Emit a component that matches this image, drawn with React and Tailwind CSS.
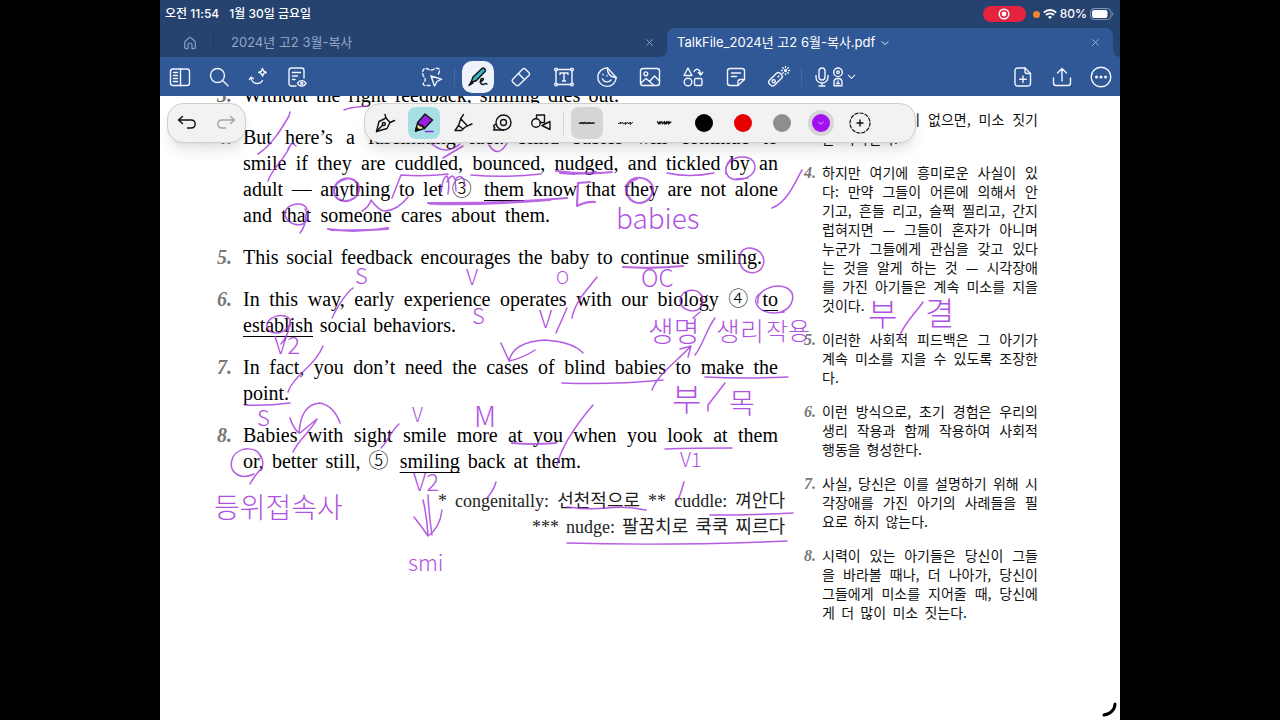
import React from 'react';

const uiFont = "font-['Inter','Noto_Sans_CJK_KR',sans-serif]";
const serifFont = "font-['Liberation_Serif','Noto_Sans_CJK_KR',serif]";
const koreanFont = "font-['Noto_Sans_CJK_KR',sans-serif]";

const Icon = ({ children, className = 'size-6' }) => (
  <svg
    viewBox="0 0 24 24"
    className={className}
    fill="none"
    stroke="currentColor"
    strokeWidth="1.4"
    strokeLinecap="round"
    strokeLinejoin="round"
    aria-hidden="true"
  >
    {children}
  </svg>
);

const icons = {
  sidebar: (
    <>
      <rect x="2.5" y="4" width="19" height="16.5" rx="2.5" />
      <path d="M12.5 4v16.5M5.5 7.5h4M5.5 10.5h4M5.5 13.5h4M5.5 16.5h4" />
    </>
  ),
  search: (
    <>
      <circle cx="10.5" cy="10.5" r="7" />
      <path d="M15.8 15.8l5.2 5" />
    </>
  ),
  spark: (
    <>
      <path d="M16.500 3.500l1.200 2.600 2.600 1.200-2.600 1.200-1.200 2.600-1.200-2.600-2.600-1.200 2.600-1.200z" />
      <path d="M3.500 14.500l1.500-2.300 2.500 1.300M5.200 12.500c.5 4 3 6 6 6 2.500 0 4.300-1.200 5.300-3" />
    </>
  ),
  docEye: (
    <>
      <path d="M11 21H6.500A2.500 2.500 0 0 1 4 18.500v-13A2.500 2.500 0 0 1 6.500 3h10A2.500 2.500 0 0 1 19 5.500V13" />
      <path d="M7.500 7.500h8M7.500 11h5M7.500 14.500h2.500" />
      <path d="M12.500 18.300c2-3.600 6.500-3.600 8.500 0-2 3.600-6.500 3.600-8.500 0z" />
      <circle cx="16.800" cy="18.300" r="1" />
    </>
  ),
  lasso: (
    <>
      <path
        strokeDasharray="3 2.200"
        d="M10 20.500H5c-2 0-2.300-2-1-3.200 1.800-2 1.500-3.800 0-5.300-1.500-2-1.800-5.500-.5-7.500 1-1.500 3-1.300 4.500-.3 2 1.200 4.500 1 6.500-.4 2-1 4.500-.8 5 1.200.4 1.500-1.200 3-1 5"
      />
      <path d="M11 11l10.500 3.200-4.500 2.300-2.500 4.500z" />
    </>
  ),
  pen: (
    <>
      <path d="M5 17.500l2-5.500L16 3.500c1.500-1.400 4.500 1.200 3.200 2.800L10.500 15.500z" fill="#3bb3c4" stroke="#111" />
      <path d="M3 20.500l2-3 2 .500zM14 17c3-1 4.500-3.500 2.500-3.500-2.500 0-3 6 .5 6 2 0 2-2 4-.5" fill="none" stroke="#111" />
    </>
  ),
  eraser: (
    <>
      <path d="M3.800 14.200L13.500 4.300c1-1 2-1 3 0l3.300 3.300c1 1 1 2 0 3L10 20c-1 1-2.200 1-3.200 0l-3-3c-.9-.9-.9-1.900 0-2.800z" />
      <path d="M9.500 8.500l6.200 6.200" />
    </>
  ),
  text: (
    <>
      <path d="M5 4.500h14M5 19.500h14M4 6v12M20 6v12" />
      <circle cx="4" cy="4.500" r="1.400" />
      <circle cx="20" cy="4.500" r="1.400" />
      <circle cx="4" cy="19.500" r="1.400" />
      <circle cx="20" cy="19.500" r="1.400" />
      <path d="M8 9.500V8h8v1.500M12 8v8M10.500 16h3" />
    </>
  ),
  sticker: (
    <>
      <path d="M12.500 3a9.200 9.200 0 1 0 8.700 9.500z" />
      <path d="M12.500 3c-.5 5.500 3 9.500 8.700 9.500" />
      <path d="M7.500 14c1.500 3.500 6.500 3.700 8.500 1M8 9.300v.6M12 10.500v.4" />
    </>
  ),
  image: (
    <>
      <rect x="2.500" y="3.500" width="19" height="17" rx="2.500" />
      <circle cx="7.800" cy="8.800" r="1.900" />
      <path d="M3 18l5-4.500 3.500 3 5-5.500 5 5M12 17l3.500 3" />
    </>
  ),
  shapes: (
    <>
      <path d="M7 3l4 7.500H3z" />
      <circle cx="7" cy="17" r="3.800" />
      <rect x="13.500" y="13.500" width="7.500" height="7" rx="1.500" />
      <path d="M13 6.500c2-3.500 6-3 6.500 2.500M17.300 7.500L19.700 10l2-2.700" />
    </>
  ),
  note: (
    <>
      <path d="M14 20.500H6A2.500 2.500 0 0 1 3.500 18V6A2.500 2.500 0 0 1 6 3.500h12A2.500 2.500 0 0 1 20.500 6v8.500z" />
      <path d="M14 20.500v-3.500a2.500 2.500 0 0 1 2.500-2.500h4M7.500 8h9M7.500 11.500h5" />
    </>
  ),
  laser: (
    <>
      <rect x="1" y="10.800" width="15" height="7" rx="2.500" transform="rotate(-45 8.500 14.300)" />
      <circle cx="6.700" cy="16.300" r="1.600" />
      <path d="M11 12l1-1" />
      <circle cx="18.500" cy="5.500" r="1" />
      <path d="M18.500 1.500v.8M18.500 8.700v.8M14.500 5.500h.8M21.700 5.500h.8M15.700 2.700l.5.500M20.800 7.800l.5.500M15.700 8.300l.5-.5M20.800 3.200l.5-.5" />
    </>
  ),
  mic: (
    <>
      <rect x="9" y="3" width="6" height="12" rx="3" />
      <path d="M6 10.500v1.500c0 8 12 8 12 0v-1.500M12 18v3M9 21h6" />
    </>
  ),
  speaker: (
    <>
      <circle cx="12" cy="7.300" r="4.300" />
      <circle cx="12" cy="7.300" r="1.300" />
      <path d="M8 20.800v-3.500c0-5 8-5 8 0v3.500zM12 16v2.500M10.500 18.500h3" />
    </>
  ),
  addPage: (
    <>
      <path d="M14 3H6.500A2.500 2.500 0 0 0 4 5.500v13A2.500 2.500 0 0 0 6.500 21h10.500a2.500 2.500 0 0 0 2.500-2.500V8.500z" />
      <path d="M14 3v3.500a2 2 0 0 0 2 2h3.500M12 11v6.500M8.700 14.200h6.500" />
    </>
  ),
  share: <path d="M12 16V3.500M7.500 8L12 3.500 16.500 8M3.500 13v5A2.500 2.500 0 0 0 6 20.500h12a2.500 2.500 0 0 0 2.500-2.500v-5" />,
  more: (
    <>
      <circle cx="12" cy="12" r="9.800" />
      <path d="M7.500 12h.01M12 12h.01M16.500 12h.01" strokeWidth="3" />
    </>
  ),
  chevron: <path d="M3 8l9 9 9-9" strokeWidth="2.800" />,
  close: <path d="M4 4l16 16M20 4L4 20" strokeWidth="2.400" />,
  home: <path d="M4 11.500c0-1 .3-1.500 1-2.200l5.300-5c1-.9 2.400-.9 3.400 0l5.300 5c.7.700 1 1.200 1 2.200V18a2.500 2.500 0 0 1-2.500 2.500H15V15a3 3 0 0 0-6 0v5.500H6.500A2.500 2.500 0 0 1 4 18z" strokeWidth="1.800" />,
  undo: <path d="M7.500 5.500l-4 3.500 4 3.500M3.500 9H16c5.500 0 5.500 8 0 8h-3.500" />,
  redo: <path d="M16.500 5.500l4 3.500-4 3.500M20.500 9H8c-5.500 0-5.500 8 0 8h3.500" />,
  fountain: (
    <>
      <path d="M3.500 20.500l2.500-10 7-3.500 4 4.500-3 6z" />
      <path d="M3.500 20.500l6-6.300M13 7l-1-3.500M17 11.500l4.500-2" />
      <circle cx="10.800" cy="13" r="1.500" />
    </>
  ),
  highlighter: (
    <>
      <path d="M3.500 20l2.200-8.500 6.800 6z" fill="#f2dc9c" stroke="#111" />
      <path d="M5.700 11.500L13 3l7.500 6-8 8.500-2-3.200-3 .2z" fill="#9b1fe0" stroke="#111" />
      <path d="M3.500 20l1-3.500 2.500 2.300z" fill="#111" stroke="#111" />
      <path d="M13.500 20.500h7.500" stroke="#9b1fe0" strokeWidth="1.600" />
    </>
  ),
  marker: (
    <>
      <path d="M4 19.500l3.500-5 4.500 3.500-1.500 1.500z" />
      <path d="M7.500 14.500c2-4 1-6.500 5-11M12 18c2.500-3 4.500-3 9-5M9.500 7.500l7 7.500" />
    </>
  ),
  tape: (
    <>
      <circle cx="13.500" cy="11.500" r="7.500" />
      <circle cx="13.500" cy="11.500" r="3" />
      <path d="M13.500 19h-10l1.300-2-1.300-2 1.500-1.500h1.500" />
    </>
  ),
  lassoShape: (
    <>
      <circle cx="7" cy="12" r="4.300" />
      <path d="M7.500 7.500V4h8v7.500H11M13 14.500l8-4v8z" />
    </>
  ),
};

const leftTools = [
  { name: 'Sidebar', icon: 'sidebar' },
  { name: 'Search', icon: 'search' },
  { name: 'Assistant', icon: 'spark' },
  { name: 'Document view', icon: 'docEye' },
];

const middleTools = [
  { name: 'Pen', icon: 'pen', active: true },
  { name: 'Eraser', icon: 'eraser' },
  { name: 'Text', icon: 'text' },
  { name: 'Sticker', icon: 'sticker' },
  { name: 'Image', icon: 'image' },
  { name: 'Shapes', icon: 'shapes' },
  { name: 'Note', icon: 'note' },
  { name: 'Laser pointer', icon: 'laser' },
];

const rightTools = [
  { name: 'Add page', icon: 'addPage' },
  { name: 'Share', icon: 'share' },
  { name: 'More', icon: 'more' },
];

const penTools = [
  { name: 'Fountain pen', icon: 'fountain' },
  { name: 'Pencil', icon: 'highlighter', active: true },
  { name: 'Highlighter', icon: 'marker' },
  { name: 'Tape', icon: 'tape' },
  { name: 'Shape pen', icon: 'lassoShape' },
];

const strokes = [
  { name: 'Thin stroke', d: 'M4.500 12.200l3-.5 1 .8 2-1 1.500 1 2-.8 2 .6 3-.3', width: 1.5, active: true },
  { name: 'Medium stroke', d: 'M4.500 12.500l2-1v1.500l2-2 1 2 2-1.500v2l2-2.500 1 2 2-2-.5 2.500 2.500-2', width: 1 },
  { name: 'Thick stroke', d: 'M4.500 10.500l1 2.500 1.500-2.500v2.500l2-2.500.5 2.500 2-2.500v2.500l2.500-2.500-1 2.500 3-2.500-.5 2.500 2.500-2', width: 1.2 },
];

const Line = ({ w = 'w-full', children }) => (
  <span className={`block whitespace-nowrap text-justify [text-align-last:justify] ${w}`}>{children}</span>
);

const Mark = ({ children }) => <span className="underline underline-offset-4 decoration-1">{children}</span>;

const Circled = ({ children }) => <span className={`font-light leading-none ${koreanFont}`}>{children}</span>;

const passage = [
  { no: 3, lines: [{ w: 'w-[376px]', text: 'Without the right feedback, smiling dies out.' }] },
  {
    no: 4,
    lines: [
      { text: 'But here’s a fascinating fact: blind babies will continue to' },
      { text: 'smile if they are cuddled, bounced, nudged, and tickled by an' },
      { text: <>adult — anything to let <Circled>③</Circled> <Mark>them</Mark> know that they are not alone</> },
      { w: 'w-[307px]', text: 'and that someone cares about them.' },
    ],
  },
  { no: 5, lines: [{ w: 'w-[519px]', text: 'This social feedback encourages the baby to continue smiling.' }] },
  {
    no: 6,
    lines: [
      { text: <>In this way, early experience operates with our biology <Circled>④</Circled> <Mark>to</Mark></> },
      { w: 'w-[213px]', text: <><Mark>establish</Mark> social behaviors.</> },
    ],
  },
  {
    no: 7,
    lines: [{ text: 'In fact, you don’t need the cases of blind babies to make the' }, { w: 'w-[46px]', text: 'point.' }],
  },
  {
    no: 8,
    lines: [
      { text: 'Babies with sight smile more at you when you look at them' },
      { w: 'w-[338px]', text: <>or, better still, <Circled>⑤</Circled> <Mark>smiling</Mark> back at them.</> },
    ],
  },
];

const translation = [
  { no: 3, lines: [{ text: '올바른 피드백이 없으면, 미소 짓기' }, { w: 'w-[76px]', text: '는 사라진다.' }] },
  {
    no: 4,
    lines: [
      { text: '하지만 여기에 흥미로운 사실이 있' },
      { text: '다: 만약 그들이 어른에 의해서 안' },
      { text: '기고, 흔들 리고, 슬쩍 찔리고, 간지' },
      { text: '럽혀지면 — 그들이 혼자가 아니며' },
      { text: '누군가 그들에게 관심을 갖고 있다' },
      { text: '는 것을 알게 하는 것 — 시각장애' },
      { text: '를 가진 아기들은 계속 미소를 지을' },
      { w: 'w-[42px]', text: '것이다.' },
    ],
  },
  {
    no: 5,
    lines: [
      { text: '이러한 사회적 피드백은 그 아기가' },
      { text: '계속 미소를 지을 수 있도록 조장한' },
      { w: 'w-[42px]', text: '다.' },
    ],
  },
  {
    no: 6,
    lines: [
      { text: '이런 방식으로, 초기 경험은 우리의' },
      { text: '생리 작용과 함께 작용하여 사회적' },
      { w: 'w-[100px]', text: '행동을 형성한다.' },
    ],
  },
  {
    no: 7,
    lines: [
      { text: '사실, 당신은 이를 설명하기 위해 시' },
      { text: '각장애를 가진 아기의 사례들을 필' },
      { w: 'w-[106px]', text: '요로 하지 않는다.' },
    ],
  },
  {
    no: 8,
    lines: [
      { text: '시력이 있는 아기들은 당신이 그들' },
      { text: '을 바라볼 때나, 더 나아가, 당신이' },
      { text: '그들에게 미소를 지어줄 때, 당신에' },
      { w: 'w-[145px]', text: '게 더 많이 미소 짓는다.' },
    ],
  },
];

// thin pencil marks: slashes, loops and underlines
const inkThin = [
  'M344 110C350 107 358 107 368 106',
  'M290 112l-1 4C282 128 272 145 258 154',
  'M288 149l4-6 4 3M291 144C285 160 272 168 268 181',
  'M307 209c-4-8-20-6-22 4-1 10 17 17 22 7 2-5 0-8-2-11M306 214Q306 226 300 233',
  'M362 211Q369 207 371 200 379 211 385 211 398 210 408 197',
  'M392 198l9-23q24 2 47-1',
  'M441 192q2-16 6-16 3 4 1 18M447 182q5-10 8-3l1 12M455 180q5-7 9 0l1 6',
  'M432 144Q446 156 460 144M463 146L443 158',
  'M489 145q9 14 18-2',
  'M471 175q34 3 70-1',
  'M667 173q22 5 47 0',
  'M726 174c-2-10 7-18 18-17 12 1 14 12 7 18-7 6-19 6-23 1-4-6-2-12 3-17M736 179l12-1',
  'M802 170c-6 10-14 32-30 38',
  'M741 252c6-8 22-3 23 9-1 11-10 13-16 11-9-3-11-15-5-22',
  'M353 288c-8 6-15 18-21 30',
  'M290 326c4-12-12-12-18-8-8 5-6 15 4 15 8 0 14-6 14-12 0 8-4 18-9 23',
  'M323 346c-8 20-30 30-35 46',
  'M501 343l8 18Q513 342 545 340q28 2 38 13M509 361q14-3 26-11',
  'M597 277c-9 12-22 24-25 41',
  'M567 308l-11 25',
  'M702 296c-6-10-21-6-22 4 0 11 16 14 21 7 3-5 2-10-1-13M700 312l-7 6',
  'M758 303c-2-14 18-20 29-15 10 6 6 20-6 24-10 3-21-1-24-7-3-5-1-8 2-11M775 313l9-1',
  'M715 318c-8 10-12 27-20 37',
  'M652 390c6-16 24-28 38-43M680 349l11-3-3 11',
  'M562 383q50 2 101-3',
  'M705 377q40 2 83 0',
  'M725 383l-17 22v6',
  'M245 405q22 1 45-2',
  'M290 418q3 10 9 15Q301 404 320 403q14 3 20 20M300 433l17-14M317 419c-6 12-18 20-24 33',
  'M399 424c-7 6-11 17-18 24',
  'M261 458c-2-12-22-12-28-1-6 14 6 24 21 17M261 456q3 6 1 12-8 8-12 16',
  'M423 500q4 16 5 36M428 495q1 20 4 40M414 517q8 10 14 19 12-8 14-26',
  'M496 482q-2 8-9 16',
  'M593 405c-12 14-30 36-36 60',
  'M665 449q30-1 67-1',
  'M684 482q-2 8-6 18',
  'M567 507q20 3 40 1t39 2',
  'M710 515q40 0 83-2',
  'M567 543q100 3 220-2',
  'M923 302c-8 12-20 22-24 36',
];

// pressed marks
const inkThick = [
  'M334 192c0-16 22-18 25-5 1 14-17 18-23 10-5-8 0-16 10-18',
  'M328 229q26 4 60-1M331 230q30 1 57-1',
  'M428 203q70 1 139-5M430 204q60 1 120-4',
  'M556 171q30 4 56 1M560 173q16 2 36-1',
  'M590 182l-12 1-1 23q10-5 18-4',
  'M626 190c0-16 24-16 27-2 0 16-19 20-25 8-4-9 1-15 9-17',
  'M623 267q30 2 60-1',
  'M512 443q20 2 44 0',
];

const inkNotes = [
  { x: 355, y: 284, size: 22, text: 'S' },
  { x: 466, y: 285, size: 22, text: 'V' },
  { x: 556, y: 284, size: 18, text: 'O' },
  { x: 641, y: 287, size: 24, text: 'OC' },
  { x: 616, y: 229, size: 28, text: 'babies' },
  { x: 472, y: 324, size: 22, text: 'S' },
  { x: 539, y: 328, size: 24, text: 'V' },
  { x: 274, y: 354, size: 24, text: 'V2' },
  { x: 648, y: 342, size: 28, text: '생명' },
  { x: 716, y: 341, size: 26, text: '생리' },
  { x: 766, y: 340, size: 24, text: '작용' },
  { x: 672, y: 411, size: 32, text: '부' },
  { x: 729, y: 414, size: 28, text: '목' },
  { x: 257, y: 426, size: 22, text: 'S' },
  { x: 412, y: 422, size: 20, text: 'V' },
  { x: 474, y: 427, size: 28, text: 'M' },
  { x: 680, y: 467, size: 20, text: 'V1' },
  { x: 413, y: 491, size: 24, text: 'V2' },
  { x: 214, y: 518, size: 28, text: '등위접속사' },
  { x: 408, y: 571, size: 22, text: 'smi' },
  { x: 868, y: 326, size: 32, text: '부' },
  { x: 925, y: 325, size: 32, text: '결' },
];

const StatusBar = () => (
  <div className="h-7 flex items-center justify-between pl-[5px] pr-[6px] text-xs font-medium text-white">
    <div className="flex gap-[10px]">
      <span>오전 11:54</span>
      <span>1월 30일 금요일</span>
    </div>
    <div className="flex items-center gap-[3px]">
      <span className="w-[43px] h-4 mr-1 rounded-full bg-[#e6233f] flex items-center justify-center">
        <svg viewBox="0 0 12 12" className="size-3" fill="none" stroke="white" strokeWidth="1.4">
          <circle cx="6" cy="6" r="4.800" />
          <circle cx="6" cy="6" r="1.700" fill="white" />
        </svg>
      </span>
      <span className="size-[7px] rounded-full bg-[#ee8434]" />
      <svg viewBox="0 0 14 10" className="w-[14px] h-[10px]" fill="none" stroke="white" strokeWidth="1.900">
        <path d="M.8 3.600c3.500-3.400 8.900-3.400 12.400 0M3 6c2.300-2.100 5.700-2.100 8 0" />
        <path d="M5 8a3 3 0 0 1 4 0L7 10z" fill="white" stroke="none" />
      </svg>
      <span>80%</span>
      <svg viewBox="0 0 24 12" className="w-6 h-3" fill="none">
        <rect x=".5" y=".5" width="20.500" height="11" rx="3.500" stroke="#7f95b8" />
        <rect x="2" y="2" width="15.500" height="8" rx="2.200" fill="white" />
        <path d="M22.300 4v4c1.500-.6 1.500-3.400 0-4z" fill="#7f95b8" />
      </svg>
    </div>
  </div>
);

const TabBar = () => (
  <nav className="h-[29px] flex text-[13px]">
    <button aria-label="Home" className="w-[54px] pl-[7px] my-1 flex items-center justify-center border-r border-[#223a62] text-[#8a9fc4]">
      <Icon className="size-4">{icons.home}</Icon>
    </button>
    <div className="flex-1 flex items-center justify-between pl-[17px] pr-[13px] text-[#93a7ca]">
      <button>2024년 고2 3월-복사</button>
      <button aria-label="Close tab">
        <Icon className="size-[9px]">{icons.close}</Icon>
      </button>
    </div>
    <div className="relative w-[446px] mr-[7px] flex items-center justify-between pl-[10px] pr-[13px] rounded-t-lg bg-[#305796] text-white">
      <svg viewBox="0 0 8 8" className="absolute right-full bottom-0 size-2" fill="#305796">
        <path d="M8 0v8H0c5 0 8-3 8-8z" />
      </svg>
      <svg viewBox="0 0 8 8" className="absolute left-full bottom-0 size-2" fill="#305796">
        <path d="M0 0v8h8c-5 0-8-3-8-8z" />
      </svg>
      <button className="flex items-center gap-[6px]">
        TalkFile_2024년 고2 6월-복사.pdf
        <Icon className="size-2">{icons.chevron}</Icon>
      </button>
      <button aria-label="Close tab" className="text-[#a9bbdb]">
        <Icon className="size-[9px]">{icons.close}</Icon>
      </button>
    </div>
  </nav>
);

const ToolButton = ({ tool, width }) => (
  <button aria-label={tool.name} className={`${width} h-full flex items-center justify-center`}>
    <span className={`size-8 flex items-center justify-center rounded-[10px] ${tool.active ? 'bg-[#eef2fb]' : ''}`}>
      <Icon>{icons[tool.icon]}</Icon>
    </span>
  </button>
);

const Toolbar = () => (
  <div className="h-[39px] flex items-center bg-[#305796] text-[#f1f5fc]">
    <div className="flex">
      {leftTools.map((tool) => (
        <ToolButton key={tool.name} tool={tool} width="w-[39px]" />
      ))}
    </div>
    <div className="flex items-center ml-[94px]">
      <ToolButton tool={{ name: 'Lasso', icon: 'lasso' }} width="w-[43px]" />
      <span className="w-px h-5 mx-px bg-[#4368a3]" />
      {middleTools.map((tool) => (
        <ToolButton key={tool.name} tool={tool} width="w-[43px]" />
      ))}
      <span className="w-px h-5 ml-px mr-2 bg-[#4368a3]" />
      <button aria-label="Record audio" className="flex items-center">
        <Icon>{icons.mic}</Icon>
        <Icon className="-ml-2 size-6">{icons.speaker}</Icon>
        <Icon className="-ml-[3px] size-[9px]">{icons.chevron}</Icon>
      </button>
    </div>
    <div className="flex ml-auto">
      {rightTools.map((tool) => (
        <ToolButton key={tool.name} tool={tool} width="w-[39px]" />
      ))}
    </div>
  </div>
);

const Swatch = ({ name, color, selected }) => (
  <button aria-label={name} className="w-[39px] flex items-center justify-center">
    <span className={`size-[26px] rounded-full flex items-center justify-center ${selected ? 'bg-[#d6d5d8]' : ''}`}>
      <span className={`size-[18px] rounded-full flex items-center justify-center text-white ${color}`}>
        {selected && <Icon className="size-[6px]">{icons.chevron}</Icon>}
      </span>
    </span>
  </button>
);

const PenBar = () => (
  <div className="absolute top-[7px] left-0 z-10 flex gap-[118px] px-[7px] text-[#111]">
    <div className="h-10 flex rounded-2xl border border-[#cfcfcf] bg-[#f2f2f2] shadow-lg">
      <button aria-label="Undo" className="w-[38px] flex items-center justify-center">
        <Icon>{icons.undo}</Icon>
      </button>
      <button aria-label="Redo" className="w-[39px] flex items-center justify-center text-[#a5a5a5]">
        <Icon>{icons.redo}</Icon>
      </button>
    </div>
    <div className="h-10 flex pr-[36px] rounded-2xl border border-[#cfcfcf] bg-[#f2f2f2] shadow-lg">
      {penTools.map((tool) => (
        <button key={tool.name} aria-label={tool.name} className="w-[39px] flex items-center justify-center">
          <span className={`size-8 flex items-center justify-center rounded-lg ${tool.active ? 'bg-[#a6e0e4]' : ''}`}>
            <Icon>{icons[tool.icon]}</Icon>
          </span>
        </button>
      ))}
      <span className="w-px h-6 mx-[3px] self-center bg-[#d4d4d4]" />
      {strokes.map((stroke) => (
        <button key={stroke.name} aria-label={stroke.name} className="w-[39px] flex items-center justify-center">
          <span className={`size-8 flex items-center justify-center rounded-lg ${stroke.active ? 'bg-[#d5d5d6]' : ''}`}>
            <Icon>
              <path d={stroke.d} strokeWidth={stroke.width} />
            </Icon>
          </span>
        </button>
      ))}
      <Swatch name="Black" color="bg-black" />
      <Swatch name="Red" color="bg-[#e60000]" />
      <Swatch name="Gray" color="bg-[#8e8e8e]" />
      <Swatch name="Purple" color="bg-[#a510f0]" selected />
      <button aria-label="Add color" className="w-[39px] flex items-center justify-center">
        <Icon>
          <circle cx="12" cy="12" r="10" strokeWidth="1.200" strokeDasharray="3.200 2" />
          <path d="M12 9v6M9 12h6" />
        </Icon>
      </button>
    </div>
  </div>
);

const Passage = () => (
  <div className={`flex-1 text-xl/[26px] text-black ${serifFont}`}>
    <div className="flex flex-col gap-4 pr-[7px]">
      {passage.map((item) => (
        <div key={item.no} className="flex">
          <span className="w-[26px] shrink-0 font-bold italic text-[#777]">{item.no}.</span>
          <p className="flex-1">
            {item.lines.map((line, i) => (
              <Line key={i} w={line.w}>{line.text}</Line>
            ))}
          </p>
        </div>
      ))}
    </div>
    <div className="flex flex-col items-end pt-[14px] text-lg/[26px] text-[#222]">
      <Line w="w-[347px]">* congenitally: 선천적으로 ** cuddle: 껴안다</Line>
      <Line w="w-[253px]">*** nudge: 팔꿈치로 쿡쿡 찌르다</Line>
    </div>
  </div>
);

const Translation = () => (
  <div className={`w-[234px] pt-7 flex flex-col gap-[15px] text-sm/[19px] text-[#111] ${koreanFont}`}>
    {translation.map((item) => (
      <div key={item.no} className="flex">
        <span className="w-[18px] shrink-0 font-['Liberation_Serif',serif] text-base/[19px] font-bold italic text-[#777]">
          {item.no}.
        </span>
        <p className="flex-1">
          {item.lines.map((line, i) => (
            <Line key={i} w={line.w}>{line.text}</Line>
          ))}
        </p>
      </div>
    ))}
  </div>
);

const Ink = () => (
  <svg
    viewBox="160 96 960 624"
    className="absolute top-0 left-0 w-full pointer-events-none"
    fill="none"
    stroke="#a335dc"
    strokeLinecap="round"
    strokeLinejoin="round"
  >
    <g strokeWidth="1.500" opacity="0.800">
      {inkThin.map((d) => (
        <path key={d} d={d} />
      ))}
    </g>
    <g strokeWidth="2.200" opacity="0.750">
      {inkThick.map((d) => (
        <path key={d} d={d} />
      ))}
    </g>
    <g fill="#a335dc" stroke="none" opacity="0.850" className={`font-light ${koreanFont}`}>
      {inkNotes.map((note) => (
        <text key={`${note.x}-${note.y}`} x={note.x} y={note.y} fontSize={note.size}>
          {note.text}
        </text>
      ))}
    </g>
    <path d="M1115 704c0 5-4 10-11 11" stroke="#000" strokeWidth="3" />
  </svg>
);

const App = () => {
  return (
    <div className="min-h-screen bg-black flex justify-center">
      <div className="w-3/4 h-screen flex flex-col bg-white">
        <header className={`bg-[#26426f] shrink-0 ${uiFont}`}>
          <StatusBar />
          <TabBar />
          <Toolbar />
        </header>
        <main className="relative flex-1 overflow-hidden">
          <PenBar />
          {/* Page scrolled slightly under the toolbar */}
          <div className="-mt-[14px] flex gap-[19px] pl-[57px] pr-[82px]">
            <Passage />
            <Translation />
          </div>
          <Ink />
        </main>
      </div>
    </div>
  );
};

export default App;
